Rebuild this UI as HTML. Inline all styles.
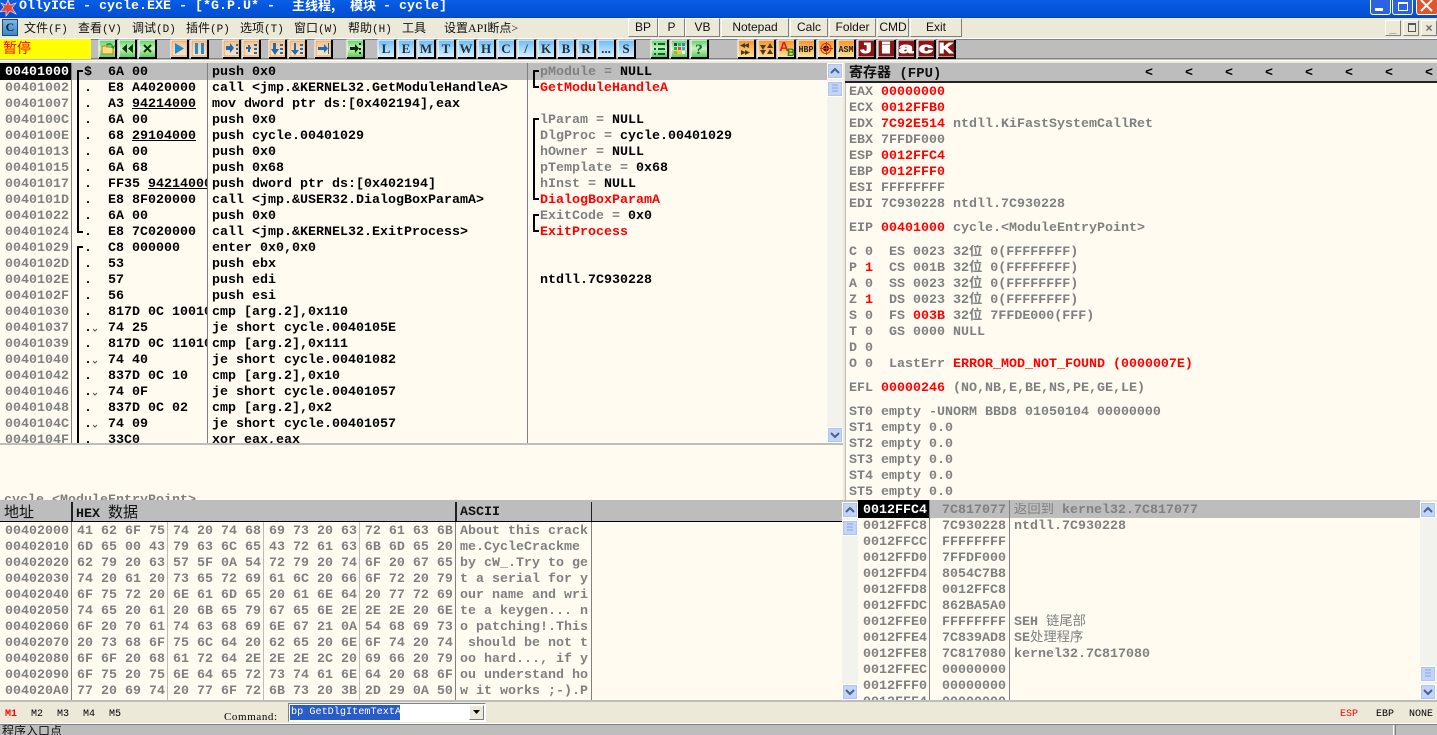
<!DOCTYPE html>
<html><head><meta charset="utf-8"><title>OllyICE</title>
<style>
html,body{margin:0;padding:0;width:1437px;height:735px;overflow:hidden;background:#ece9d8}
div,pre{position:absolute;margin:0;padding:0}
pre{font:bold 13.333px/16px "Liberation Mono","Noto Sans CJK SC",monospace;white-space:pre;overflow:hidden}
.g{color:#808080}.k{color:#000}.r{color:#f00}.w{color:#fff}
.m{position:absolute;top:19px;font:12px/18px "Liberation Serif","Noto Sans CJK SC",serif;color:#111;white-space:pre}
.m i{font:11px "Liberation Mono",monospace}
.b{position:absolute;top:18px;height:17px;background:#ece9d8;border:1px solid;border-color:#fff #808080 #808080 #fff;font:12px/17px "Liberation Sans",sans-serif;text-align:center;color:#111}
.h{font:bold 13.333px/18px "Liberation Mono","Noto Sans CJK SC",monospace;position:absolute;white-space:pre;color:#111}
.v{width:1px;background:#808080}
.sb{background:#f3f3ee}
.bt{left:0;width:14px;height:14px;background:#c3d4fb;border:1px solid #fff;outline:1px solid #b5c5e8;outline-offset:-2px}
u{text-decoration:underline}
.s{position:absolute;font:10px/12px "Liberation Mono",monospace;font-weight:bold}
</style></head><body>

<!-- title bar -->
<div style="left:0;top:0;width:1437px;height:18px;background:linear-gradient(#0a5fe6,#0555dd 40%,#0350d4 85%,#0a45b8)"></div>
<svg style="position:absolute;left:0;top:0" width="18" height="18"><polygon points="8,0 10,5 16,3 12,8 16,14 10,11 6,16 6,11 0,12 4,7 1,3 6,5" fill="#e8483a" stroke="#fff" stroke-width=".6"/></svg>
<pre class="w" style="left:19px;top:-3px;padding-top:2px;height:18px">OllyICE - cycle.EXE - [*G.P.U* -</pre>
<pre class="w" style="left:292px;top:-3px;height:18px;font-family:'Noto Sans CJK SC','Liberation Mono',monospace;font-size:13px">主线程,</pre>
<pre class="w" style="left:350px;top:-3px;height:18px;font-family:'Noto Sans CJK SC','Liberation Mono',monospace;font-size:13px">模块</pre>
<pre class="w" style="left:383px;top:-3px;padding-top:2px;height:18px">- cycle]</pre>
<div style="left:1370px;top:0;width:19px;height:14px;background:#2d62e0;border:1px solid #fff;border-top:0;border-radius:0 0 3px 3px"></div>
<div style="left:1375px;top:8px;width:8px;height:3px;background:#fff"></div>
<div style="left:1392px;top:0;width:19px;height:14px;background:#2d62e0;border:1px solid #fff;border-top:0;border-radius:0 0 3px 3px"></div>
<div style="left:1398px;top:2px;width:8px;height:6px;border:1px solid #fff;border-top-width:2px"></div>
<div style="left:1416px;top:0;width:20px;height:14px;background:#e2542a;border:1px solid #fff;border-top:0;border-radius:0 0 3px 3px"></div>
<svg style="position:absolute;left:1416px;top:0" width="21" height="15"><path d="M5 0L16 11M16 0L5 11" stroke="#fff" stroke-width="2"/></svg>

<!-- menu -->
<div style="left:0;top:18px;width:1437px;height:20px;background:#ece9d8"></div>
<div style="left:2px;top:19px;width:14px;height:15px;background:linear-gradient(#7ab8e8,#3d86c8);border:1px solid #1c4a78;color:#123;font:bold 12px/15px 'Liberation Serif',serif;text-align:center">C</div>
<div class="m" style="left:24px">文件<i>(F)</i></div>
<div class="m" style="left:78px">查看<i>(V)</i></div>
<div class="m" style="left:132px">调试<i>(D)</i></div>
<div class="m" style="left:186px">插件<i>(P)</i></div>
<div class="m" style="left:240px">选项<i>(T)</i></div>
<div class="m" style="left:294px">窗口<i>(W)</i></div>
<div class="m" style="left:348px">帮助<i>(H)</i></div>
<div class="m" style="left:402px">工具</div>
<div class="m" style="left:444px">设置API断点&gt;</div>
<div class="b" style="left:628px;width:28px">BP</div>
<div class="b" style="left:658px;width:25px">P</div>
<div class="b" style="left:685px;width:33px">VB</div>
<div class="b" style="left:721px;width:66px">Notepad</div>
<div class="b" style="left:790px;width:36px">Calc</div>
<div class="b" style="left:829px;width:45px">Folder</div>
<div class="b" style="left:877px;width:30px">CMD</div>
<div class="b" style="left:910px;width:50px">Exit</div>
<div class="b" style="left:1385px;top:20px;width:14px;height:14px;line-height:14px;font-weight:bold;color:#666">_</div>
<div class="b" style="left:1403px;top:20px;width:14px;height:14px"></div>
<div style="left:1408px;top:23px;width:6px;height:6px;border:1px solid #555;border-top-width:2px"></div>
<div class="b" style="left:1421px;top:20px;width:14px;height:14px;line-height:14px;font-weight:bold;color:#666">×</div>

<!-- toolbar -->
<div style="left:0;top:38px;width:1437px;height:1px;background:#fff"></div>
<div style="left:0;top:39px;width:1437px;height:1px;background:#808080"></div>
<div style="left:0;top:40px;width:1437px;height:18px;background:#bdbdbd"></div>
<div style="left:0;top:58px;width:1437px;height:1px;background:#808080"></div>
<div style="left:0;top:59px;width:1437px;height:1px;background:#bdbdbd"></div>
<div style="left:0;top:60px;width:1437px;height:3px;background:#ece9d8;border-top:1px solid #fff;box-sizing:border-box"></div>
<div style="left:0;top:39px;width:91px;height:20px;background:#ff0"></div>
<pre class="r" style="left:3px;top:39px;height:20px;font-family:'Noto Sans CJK SC',sans-serif;font-weight:normal;font-size:14px;line-height:18px">暂停</pre>

<svg style="position:absolute;left:0;top:36px" width="1000" height="26" font-family="Liberation Serif" font-weight="bold" font-size="13" text-anchor="middle">
<defs>
<linearGradient id="gg" x1="0" y1="0" x2="0" y2="1"><stop offset="0" stop-color="#5fd35f"/><stop offset=".5" stop-color="#c8f0c0"/><stop offset="1" stop-color="#5ecb5e"/></linearGradient>
<linearGradient id="go" x1="0" y1="0" x2="0" y2="1"><stop offset="0" stop-color="#f2c28e"/><stop offset="1" stop-color="#fbe9d2"/></linearGradient>
<linearGradient id="gb" x1="0" y1="0" x2="0" y2="1"><stop offset="0" stop-color="#6cbdf5"/><stop offset="1" stop-color="#d9effd"/></linearGradient>
<linearGradient id="gy" x1="0" y1="0" x2="0" y2="1"><stop offset="0" stop-color="#f4932e"/><stop offset="1" stop-color="#fde090"/></linearGradient>
<g id="f"><path d="M0 18V0H16" fill="none" stroke="#fff"/><path d="M17 0V18H0" fill="none" stroke="#000" stroke-width="2"/></g>
<g id="G"><rect width="17" height="17" fill="url(#gg)"/><use href="#f"/></g>
<g id="O"><rect width="17" height="17" fill="url(#go)"/><rect x="1" y="1" width="15" height="15" fill="none" stroke="#f0a050"/><use href="#f"/></g>
<g id="B"><rect width="17" height="17" fill="url(#gb)"/><use href="#f"/></g>
<g id="Y"><rect width="17" height="17" fill="url(#gy)"/><use href="#f"/></g>
<g id="R"><rect width="17" height="17" fill="#8c1414"/><use href="#f"/></g>
</defs>
<g transform="translate(0,4)">
<use href="#G" x="99"/><path d="M102 14V6h4l1 1h6v7z" fill="#ffe080" stroke="#a88020"/><path d="M106 4c3-2 6-1 7 2l2-1-1 4-4-2 2-1c-1-1-3-1-5 0z" fill="#2a9a2a"/>
<use href="#G" x="119"/><path d="M127 4v9l-5-4.500zM133 4v9l-5-4.500z" fill="#0a3a0a"/>
<use href="#G" x="139"/><path d="M144 5l7 7M151 5l-7 7" stroke="#0a3a0a" stroke-width="2"/>
<use href="#O" x="171"/><path d="M175 3v11l9-5.500z" fill="#1d8ccf"/>
<use href="#O" x="191"/><path d="M195 3h3v11h-3zM201 3h3v11h-3z" fill="#1d8ccf"/>
<use href="#O" x="223"/><path d="M226 6h4V3l4 5-4 5v-3h-4z" fill="#1d6cb0"/><path d="M236 4h2v2h-2zM236 8h2v2h-2zM236 12h2v2h-2z" fill="#1d6cb0"/>
<use href="#O" x="243"/><path d="M246 8h5M249 5v7" stroke="#1d6cb0" stroke-width="2"/><path d="M254 4h3v2h-3zM254 8h3v2h-3zM254 12h3v2h-3z" fill="#1d6cb0"/>
<use href="#O" x="269"/><path d="M273 3h3v6h3l-4 6-4-6h2z" fill="#1d6cb0"/><path d="M280 4h3v2h-3zM280 8h3v2h-3zM280 12h3v2h-3z" fill="#1d6cb0"/>
<use href="#O" x="289"/><path d="M294 3h2v7h3l-4 5-4-5h3z" fill="#1d6cb0"/><path d="M300 4h3v2h-3zM300 8h3v2h-3zM300 12h3v2h-3z" fill="#1d6cb0"/>
<use href="#O" x="315"/><path d="M318 7h6V4l4 4.500-4 4.500v-3h-6z" fill="#1d6cb0"/><rect x="328" y="3" width="1" height="11" fill="#1d6cb0"/>
<use href="#G" x="347"/><path d="M350 7h5V4l4 4.500-4 4.500v-3h-5z" fill="#0a2a0a"/><path d="M359 3h2v2h-2zM359 8h2v2h-2zM359 12h2v2h-2z" fill="#0a2a0a"/>
<use href="#B" x="378"/><text x="386" y="13" fill="#234">L</text>
<use href="#B" x="398"/><text x="406" y="13" fill="#234">E</text>
<use href="#B" x="418"/><text x="426" y="13" fill="#234">M</text>
<use href="#B" x="438"/><text x="446" y="13" fill="#234">T</text>
<use href="#B" x="458"/><text x="466" y="13" fill="#234">W</text>
<use href="#B" x="478"/><text x="486" y="13" fill="#234">H</text>
<use href="#B" x="498"/><text x="506" y="13" fill="#234">C</text>
<use href="#B" x="518"/><text x="526" y="13" fill="#234">/</text>
<use href="#B" x="538"/><text x="546" y="13" fill="#234">K</text>
<use href="#B" x="558"/><text x="566" y="13" fill="#234">B</text>
<use href="#B" x="578"/><text x="586" y="13" fill="#234">R</text>
<use href="#B" x="598"/><text x="606" y="13" fill="#234">...</text>
<use href="#B" x="618"/><text x="626" y="13" fill="#234">S</text>
<use href="#G" x="651"/><path d="M654 3h2v2h-2zM654 8h2v2h-2zM654 13h2v2h-2zM658 3h7v2h-7zM658 8h7v2h-7zM658 13h7v2h-7z" fill="#063"/>
<use href="#G" x="671"/><rect x="674" y="3" width="3" height="3" fill="#245"/><rect x="678" y="3" width="3" height="3" fill="#3a7"/><rect x="682" y="3" width="3" height="3" fill="#47c"/><rect x="674" y="7" width="3" height="3" fill="#3a3"/><rect x="678" y="7" width="3" height="3" fill="#e44"/><rect x="682" y="7" width="3" height="3" fill="#4ac"/><rect x="674" y="11" width="3" height="3" fill="#e90"/><rect x="678" y="11" width="3" height="3" fill="#ec3"/><rect x="682" y="11" width="3" height="3" fill="#fff"/>
<use href="#G" x="691"/><text x="699" y="14" fill="#063" font-size="15">?</text>
<use href="#Y" x="738"/><path d="M745 3v5l-5-2.500zM749 3v5l-5-2.500zM741 10v5l5-2.500zM745 10v5l5-2.500z" fill="#4a3a20"/>
<use href="#Y" x="758"/><path d="M760 5h6l-3 5zM760 10h6l-3 5zM767 8h6l-3-5zM767 14h6l-3-5z" fill="#4a3a20"/>
<use href="#Y" x="778"/><text x="784" y="11" fill="#e02020" font-family="Liberation Sans" font-size="13">A</text><text x="791" y="16" fill="#1a8a1a" font-family="Liberation Sans" font-size="11">B</text>
<use href="#Y" x="798"/><text x="806" y="12" fill="#222" font-family="Liberation Mono" font-size="9" textLength="15" lengthAdjust="spacingAndGlyphs">HBP</text>
<use href="#Y" x="818"/><circle cx="826" cy="8.500" r="5" fill="none" stroke="#d03010"/><circle cx="826" cy="8.500" r="3" fill="#501008"/><path d="M820 8.500h13M826.500 2v13" stroke="#d03010"/>
<use href="#Y" x="838"/><text x="846" y="12" fill="#222" font-family="Liberation Mono" font-size="9" textLength="15" lengthAdjust="spacingAndGlyphs">ASM</text>
<g font-family="Liberation Sans" font-size="15" font-weight="900" fill="#fff" stroke="#fff" stroke-width="1">
<use href="#R" x="858"/><text x="866" y="13" textLength="11" lengthAdjust="spacingAndGlyphs">J</text>
<use href="#R" x="878"/><text x="886" y="13" textLength="11" lengthAdjust="spacingAndGlyphs">i</text>
<use href="#R" x="898"/><text x="906" y="13" textLength="14" lengthAdjust="spacingAndGlyphs">a</text>
<use href="#R" x="918"/><text x="926" y="13" textLength="14" lengthAdjust="spacingAndGlyphs">c</text>
<use href="#R" x="938"/><text x="946" y="13" textLength="14" lengthAdjust="spacingAndGlyphs">K</text>
</g>
</g>
</svg>

<!-- disassembly -->
<div style="left:0;top:63px;width:843px;height:380px;background:#fffbf0;overflow:hidden">
<div style="left:72px;top:0;width:755px;height:17px;background:#bdbdbd"></div>
<div style="left:0;top:0;width:71px;height:17px;background:#000"></div>
<div class="v" style="left:71px;top:0;height:380px;background:#808080"></div>
<div class="v" style="left:207px;top:0;height:380px"></div>
<div class="v" style="left:527px;top:0;height:380px"></div>
<pre class="g" style="left:5px;top:2px;height:378px"><span class="w">00401000</span>
00401002
00401007
0040100C
0040100E
00401013
00401015
00401017
0040101D
00401022
00401024
00401029
0040102D
0040102E
0040102F
00401030
00401037
00401039
00401040
00401042
00401046
00401048
0040104C
0040104F</pre>
<pre class="k" style="left:84px;top:2px;height:378px">$
.
.
.
.
.
.
.
.
.
.
.
.
.
.
.
.
.
.
.
.
.
.
.</pre>
<pre class="k" style="left:108px;top:2px;width:99px;height:378px">6A 00
E8 A4020000
A3 <u>94214000</u>
6A 00
68 <u>29104000</u>
6A 00
6A 68
FF35 <u>94214000</u>
E8 8F020000
6A 00
E8 7C020000
C8 000000
53
57
56
817D 0C 10010000
74 25
817D 0C 11010000
74 40
837D 0C 10
74 0F
837D 0C 02
74 09
33C0</pre>
<pre class="k" style="left:212px;top:2px;height:378px">push 0x0
call &lt;jmp.&amp;KERNEL32.GetModuleHandleA&gt;
mov dword ptr ds:[0x402194],eax
push 0x0
push cycle.00401029
push 0x0
push 0x68
push dword ptr ds:[0x402194]
call &lt;jmp.&amp;USER32.DialogBoxParamA&gt;
push 0x0
call &lt;jmp.&amp;KERNEL32.ExitProcess&gt;
enter 0x0,0x0
push ebx
push edi
push esi
cmp [arg.2],0x110
je short cycle.0040105E
cmp [arg.2],0x111
je short cycle.00401082
cmp [arg.2],0x10
je short cycle.00401057
cmp [arg.2],0x2
je short cycle.00401057
xor eax,eax</pre>
<pre class="g" style="left:540px;top:2px;height:378px">pModule = <span class="k">NULL</span>
<span class="r">GetModuleHandleA</span>

lParam = <span class="k">NULL</span>
DlgProc = <span class="k">cycle.00401029</span>
hOwner = <span class="k">NULL</span>
pTemplate = <span class="k">0x68</span>
hInst = <span class="k">NULL</span>
<span class="r">DialogBoxParamA</span>
ExitCode = <span class="k">0x0</span>
<span class="r">ExitProcess</span>


<span class="k">ntdll.7C930228</span></pre>
<svg style="position:absolute;left:0;top:0" width="560" height="380" fill="none" stroke="#000" stroke-width="2">
<path d="M83 8H78V169H83"/><path d="M83 184H78V380"/>
<path d="M539 8H534V24H539"/><path d="M539 56H534V136H539"/><path d="M539 152H534V168H539"/>
<g stroke-width="1" stroke="#555"><path d="M93 266l2 2 2-2M93 298l2 2 2-2M93 330l2 2 2-2M93 362l2 2 2-2"/></g>
</svg>
<div class="sb" style="left:827px;top:0;width:16px;height:380px">
<div class="bt" style="top:0"></div><div class="bt" style="top:18px;height:14px"></div><div class="bt" style="top:364px"></div>
<svg style="position:absolute;left:0;top:0" width="16" height="380" fill="none" stroke="#4a6288" stroke-width="2"><path d="M4 10l4-4 4 4M4 370l4 4 4-4"/><path d="M5 22h6M5 25h6M5 28h6" stroke="#8aa4dc" stroke-width="1"/></svg>
</div>
</div>
<div style="left:0;top:443px;width:843px;height:2px;background:#bdbdbd"></div>

<!-- info pane -->
<div style="left:0;top:445px;width:843px;height:55px;background:#fffbf0;overflow:hidden">
<pre class="g" style="left:4px;top:48px;height:7px">cycle.&lt;ModuleEntryPoint&gt;</pre>
</div>
<div style="left:0;top:500px;width:858px;height:2px;background:#bdbdbd"></div>

<!-- registers -->
<div style="left:843px;top:63px;width:2px;height:437px;background:#ece9d8"></div>
<div style="left:845px;top:63px;width:592px;height:437px;background:#fffbf0;border-left:1px solid #bdbdbd;box-sizing:border-box;overflow:hidden"></div>
<div style="left:845px;top:63px;width:592px;height:18px;background:#bdbdbd;border-bottom:2px solid #222"></div>
<div class="h" style="left:849px;top:65px;font-size:14px">寄存器 (FPU)</div>
<pre class="k" style="left:1145px;top:66px;height:14px">&lt;</pre>
<pre class="k" style="left:1185px;top:66px;height:14px">&lt;</pre>
<pre class="k" style="left:1225px;top:66px;height:14px">&lt;</pre>
<pre class="k" style="left:1265px;top:66px;height:14px">&lt;</pre>
<pre class="k" style="left:1305px;top:66px;height:14px">&lt;</pre>
<pre class="k" style="left:1345px;top:66px;height:14px">&lt;</pre>
<pre class="k" style="left:1385px;top:66px;height:14px">&lt;</pre>
<pre class="k" style="left:1425px;top:66px;height:14px;width:12px">&lt;</pre>
<pre class="g" style="left:849px;top:85px;width:580px">EAX <span class="r">00000000</span>
ECX <span class="r">0012FFB0</span>
EDX <span class="r">7C92E514</span> ntdll.KiFastSystemCallRet
EBX 7FFDF000
ESP <span class="r">0012FFC4</span>
EBP <span class="r">0012FFF0</span>
ESI FFFFFFFF
EDI 7C930228 ntdll.7C930228</pre>
<pre class="g" style="left:849px;top:221px;width:580px">EIP <span class="r">00401000</span> cycle.&lt;ModuleEntryPoint&gt;</pre>
<pre class="g" style="left:849px;top:245px;width:580px">C 0  ES 0023 32位 0(FFFFFFFF)
P <span class="r">1</span>  CS 001B 32位 0(FFFFFFFF)
A 0  SS 0023 32位 0(FFFFFFFF)
Z <span class="r">1</span>  DS 0023 32位 0(FFFFFFFF)
S 0  FS <span class="r">003B</span> 32位 7FFDE000(FFF)
T 0  GS 0000 NULL
D 0
O 0  LastErr <span class="r">ERROR_MOD_NOT_FOUND (0000007E)</span></pre>
<pre class="g" style="left:849px;top:381px;width:580px">EFL <span class="r">00000246</span> (NO,NB,E,BE,NS,PE,GE,LE)</pre>
<pre class="g" style="left:849px;top:405px;width:580px;height:95px">ST0 empty -UNORM BBD8 01050104 00000000
ST1 empty 0.0
ST2 empty 0.0
ST3 empty 0.0
ST4 empty 0.0
ST5 empty 0.0</pre>

<!-- dump -->
<div style="left:0;top:502px;width:842px;height:198px;background:#fffbf0;overflow:hidden">
<div style="left:0;top:0;width:842px;height:19px;background:#bdbdbd;border-bottom:1px solid #000"></div>
<div style="left:71px;top:0;width:2px;height:19px;background:#222"></div>
<div style="left:455px;top:0;width:2px;height:19px;background:#222"></div>
<div style="left:591px;top:0;width:1px;height:19px;background:#222"></div>
<div class="h" style="left:4px;top:1px;font-weight:normal;font-family:'Noto Sans CJK SC',sans-serif;font-size:15px">地址</div>
<div class="h" style="left:76px;top:1px">HEX <span style="font-family:'Noto Sans CJK SC',sans-serif;font-weight:normal;font-size:15px">数据</span></div>
<div class="h" style="left:460px;top:2px">ASCII</div>
<div class="v" style="left:71px;top:20px;height:178px"></div>
<div class="v" style="left:167px;top:20px;height:178px;background:#bbb"></div>
<div class="v" style="left:263px;top:20px;height:178px;background:#bbb"></div>
<div class="v" style="left:359px;top:20px;height:178px;background:#bbb"></div>
<div class="v" style="left:455px;top:20px;height:178px"></div>
<div class="v" style="left:591px;top:20px;height:178px"></div>
<pre class="g" style="left:5px;top:22px;height:176px">00402000
00402010
00402020
00402030
00402040
00402050
00402060
00402070
00402080
00402090
004020A0</pre>
<pre class="g" style="left:77px;top:22px;height:176px">41 62 6F 75 74 20 74 68 69 73 20 63 72 61 63 6B
6D 65 00 43 79 63 6C 65 43 72 61 63 6B 6D 65 20
62 79 20 63 57 5F 0A 54 72 79 20 74 6F 20 67 65
74 20 61 20 73 65 72 69 61 6C 20 66 6F 72 20 79
6F 75 72 20 6E 61 6D 65 20 61 6E 64 20 77 72 69
74 65 20 61 20 6B 65 79 67 65 6E 2E 2E 2E 20 6E
6F 20 70 61 74 63 68 69 6E 67 21 0A 54 68 69 73
20 73 68 6F 75 6C 64 20 62 65 20 6E 6F 74 20 74
6F 6F 20 68 61 72 64 2E 2E 2E 2C 20 69 66 20 79
6F 75 20 75 6E 64 65 72 73 74 61 6E 64 20 68 6F
77 20 69 74 20 77 6F 72 6B 73 20 3B 2D 29 0A 50</pre>
<pre class="g" style="left:460px;top:22px;height:176px">About this crack
me.CycleCrackme 
by cW_.Try to ge
t a serial for y
our name and wri
te a keygen... n
o patching!.This
 should be not t
oo hard..., if y
ou understand ho
w it works ;-).P</pre>
</div>
<div class="sb" style="left:842px;top:502px;width:16px;height:198px">
<div class="bt" style="top:0"></div><div class="bt" style="top:18px"></div><div class="bt" style="top:182px"></div>
<svg style="position:absolute;left:0;top:0" width="16" height="198" fill="none" stroke="#4a6288" stroke-width="2"><path d="M4 10l4-4 4 4M4 188l4 4 4-4"/><path d="M5 22h6M5 25h6M5 28h6" stroke="#8aa4dc" stroke-width="1"/></svg>
</div>

<!-- stack -->
<div style="left:858px;top:500px;width:562px;height:200px;background:#fffbf0;overflow:hidden">
<div style="left:71px;top:0;width:491px;height:18px;background:#bdbdbd"></div>
<div style="left:0;top:0;width:71px;height:18px;background:#000"></div>
<div class="v" style="left:71px;top:0;height:200px"></div>
<div class="v" style="left:151px;top:0;height:200px"></div>
<pre class="g" style="left:5px;top:3px;height:197px"><span class="w">0012FFC4</span>
0012FFC8
0012FFCC
0012FFD0
0012FFD4
0012FFD8
0012FFDC
0012FFE0
0012FFE4
0012FFE8
0012FFEC
0012FFF0
0012FFF4</pre>
<pre class="g" style="left:84px;top:3px;height:197px">7C817077
7C930228
FFFFFFFF
7FFDF000
8054C7B8
0012FFC8
862BA5A0
FFFFFFFF
7C839AD8
7C817080
00000000
00000000
00000000</pre>
<pre class="g" style="left:156px;top:3px;height:197px"><span style="font-weight:normal">返回到</span> kernel32.7C817077
ntdll.7C930228





SEH <span style="font-weight:normal">链尾部</span>
SE<span style="font-weight:normal">处理程序</span>
kernel32.7C817080</pre>
</div>
<div class="sb" style="left:1420px;top:502px;width:17px;height:198px">
<div class="bt" style="top:0"></div><div class="bt" style="top:164px"></div><div class="bt" style="top:182px"></div>
<svg style="position:absolute;left:0;top:0" width="16" height="198" fill="none" stroke="#4a6288" stroke-width="2"><path d="M4 10l4-4 4 4M4 188l4 4 4-4"/><path d="M5 168h6M5 171h6M5 174h6" stroke="#8aa4dc" stroke-width="1"/></svg>
</div>

<!-- bottom -->
<div style="left:0;top:700px;width:1437px;height:2px;background:#bdbdbd"></div>
<div style="left:0;top:702px;width:1437px;height:21px;background:#ece9d8"></div>
<div class="s r" style="left:5px;top:709px">M1</div>
<div class="s k" style="left:31px;top:709px;font-weight:normal">M2</div>
<div class="s k" style="left:57px;top:709px;font-weight:normal">M3</div>
<div class="s k" style="left:83px;top:709px;font-weight:normal">M4</div>
<div class="s k" style="left:109px;top:709px;font-weight:normal">M5</div>
<div class="s k" style="left:224px;top:711px;font-weight:normal;font-size:11px;font-family:'Liberation Serif',serif;letter-spacing:.6px">Command:</div>
<div style="left:288px;top:703px;width:198px;height:19px;background:#fff;border:1px solid;border-color:#808080 #fff #fff #808080;box-sizing:border-box"></div>
<div style="left:290px;top:705px;width:110px;height:15px;background:#2a5cc8"></div>
<pre class="w" style="left:291px;top:705px;height:15px;font-weight:normal;font-size:10.2px;line-height:15px">bp GetDlgItemTextA</pre>
<div style="left:469px;top:705px;width:15px;height:15px;background:#ece9d8;border:1px solid;border-color:#fff #808080 #808080 #fff;box-sizing:border-box"></div>
<svg style="position:absolute;left:472px;top:710px" width="10" height="6"><path d="M1 0h7L4.500 4z" fill="#000"/></svg>
<div class="s r" style="left:1340px;top:709px;font-weight:normal">ESP</div>
<div class="s k" style="left:1376px;top:709px;font-weight:normal">EBP</div>
<div class="s k" style="left:1409px;top:709px;font-weight:normal">NONE</div>
<div style="left:0;top:723px;width:1437px;height:1px;background:#fff"></div>
<div style="left:0;top:724px;width:1437px;height:1px;background:#808080"></div>
<div style="left:0;top:725px;width:1437px;height:10px;background:#bdbdbd;overflow:hidden">
<div style="left:2px;top:-1px;font:12px/14px 'Noto Sans CJK SC',sans-serif;color:#111;white-space:pre">程序入口点</div>
<div style="left:1393px;top:0;width:1px;height:10px;background:#fff"></div>
<div style="left:1395px;top:0;width:1px;height:10px;background:#808080"></div>
</div>
</body></html>
